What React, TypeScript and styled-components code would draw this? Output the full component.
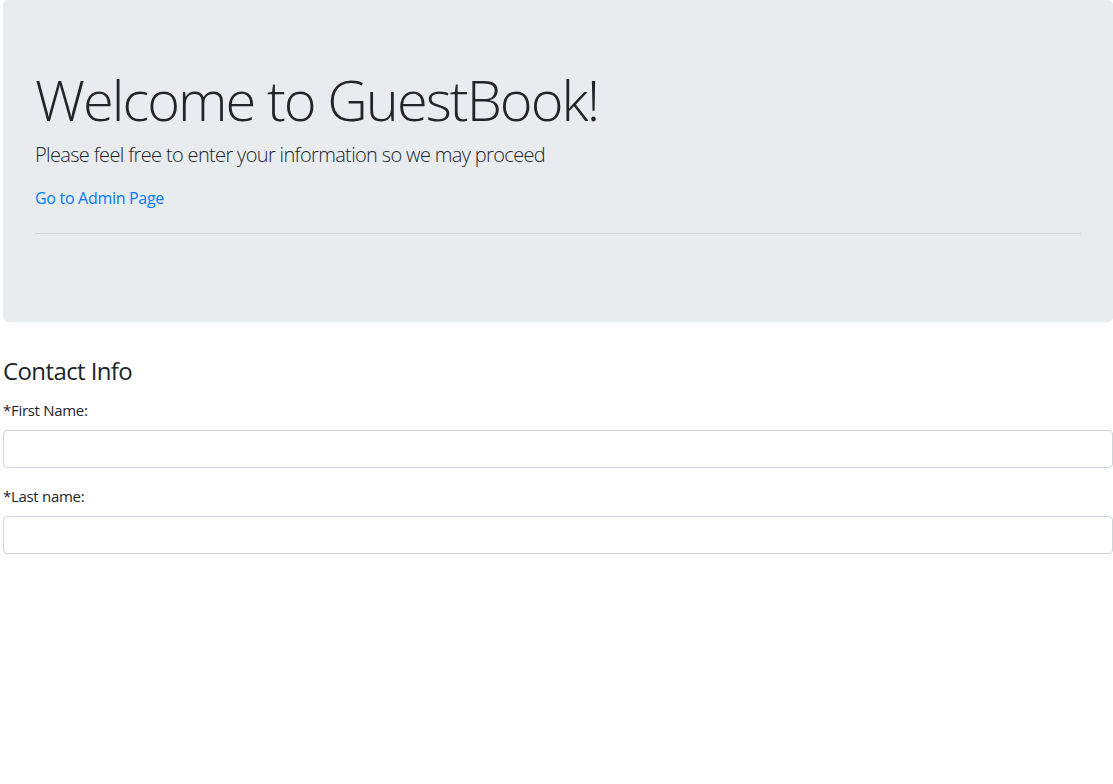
import React from "react";
import styled, { createGlobalStyle } from "styled-components";

const Global = createGlobalStyle`
  html, body { margin: 0; padding: 0; background: #fff; }
  body {
    font-family: "Open Sans", "Noto Sans", "Liberation Sans", sans-serif;
    color: #212529;
    font-size: 16px;
    line-height: 1.5;
  }
  * { box-sizing: border-box; }
`;

const Page = styled.div`
  padding-left: 3px;
`;

const Jumbotron = styled.section`
  background: #e9ecef;
  border-radius: 4.8px;
  padding: 66px 32px 64px;
  margin-bottom: 35px;
`;

const Title = styled.h1`
  margin: 0 0 7px;
  font-size: 56px;
  font-weight: 300;
  line-height: 1.2;
  letter-spacing: -1.95px;
`;

const Lead = styled.p`
  margin: 0 0 16px;
  font-size: 20px;
  font-weight: 300;
  line-height: 1.5;
  letter-spacing: -0.65px;
`;

const AdminLink = styled.a`
  color: #007bff;
  text-decoration: none;
  font-size: 16px;
  letter-spacing: -0.3px;
`;

const Rule = styled.hr`
  margin: 23px 0 24px;
  border: 0;
  border-top: 1px solid rgba(0, 0, 0, 0.1);
`;

const Heading = styled.h4`
  margin: 0 0 12px;
  font-size: 24px;
  font-weight: 400;
  line-height: 1.2;
  letter-spacing: -0.6px;
`;

const FormGroup = styled.div`
  margin-bottom: 16px;
`;

const Label = styled.label`
  display: block;
  margin-bottom: 8px;
  font-size: 15px;
  line-height: 24px;
  letter-spacing: -0.3px;
`;

const Input = styled.input`
  display: block;
  width: 100%;
  height: 38px;
  padding: 6px 12px;
  font: inherit;
  color: #495057;
  background: #fff;
  border: 1px solid #ced4da;
  border-radius: 4px;
`;

export default function App() {
  return (
    <Page>
      <Global />
      <Jumbotron>
        <Title>Welcome to GuestBook!</Title>
        <Lead>Please feel free to enter your information so we may proceed</Lead>
        <AdminLink href="#">Go to Admin Page</AdminLink>
        <Rule />
      </Jumbotron>
      <Heading>Contact Info</Heading>
      <FormGroup>
        <Label>*First Name:</Label>
        <Input type="text" />
      </FormGroup>
      <FormGroup>
        <Label>*Last name:</Label>
        <Input type="text" />
      </FormGroup>
    </Page>
  );
}
